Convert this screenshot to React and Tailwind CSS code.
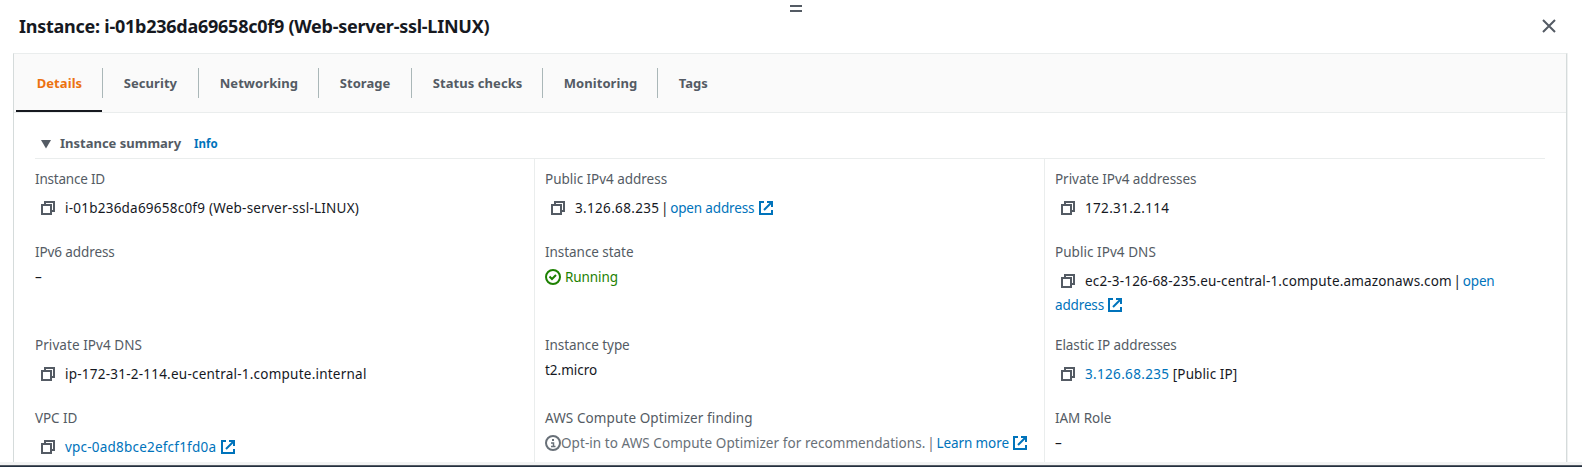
function CopyIcon() {
  return (
    <svg viewBox="0 0 16 16" className="mr-[9px] ml-[5px] inline-block size-4 align-[-3px]" fill="none" stroke="#545b64" strokeWidth="2">
      <path d="M2 5h9v9H2z" />
      <path d="M5 5V2h9v9h-3" />
    </svg>
  );
}

function ExternalIcon() {
  return (
    <svg viewBox="0 0 16 16" className="inline-block size-4 align-[-3px]" fill="none" stroke="#0073bb" strokeWidth="2">
      <path d="M14 10v4H2V2h4" />
      <path d="M9 2h5v5M6 10l8-8" />
    </svg>
  );
}

function CheckIcon() {
  return (
    <svg viewBox="0 0 16 16" className="mr-1 inline-block size-4 align-[-3px]" fill="none" stroke="#1d8102" strokeWidth="2">
      <circle cx="8" cy="8" r="7" />
      <path d="M4.500 7.500L7 10l4-4" />
    </svg>
  );
}

function InfoIcon() {
  return (
    <svg viewBox="0 0 16 16" className="inline-block size-4 align-[-3px]" fill="none" stroke="#687078" strokeWidth="2">
      <circle cx="8" cy="8" r="7" />
      <path d="M7 5h2" />
      <path d="M6 8h2.500v3.500M6 11.500h4.500" strokeWidth="1.500" />
    </svg>
  );
}

const tabs = [
  { name: "Details", size: "w-[87px] border-r text-[#ec7211]", active: true },
  { name: "Security", size: "w-[96px] border-r" },
  { name: "Networking", size: "w-[120px] border-r" },
  { name: "Storage", size: "w-[93px] border-r" },
  { name: "Status checks", size: "w-[131px] border-r" },
  { name: "Monitoring", size: "w-[115px] border-r" },
  { name: "Tags", size: "w-[80px]" },
];

const T = ({ t = "", children }) => <span className={t}>{children}</span>;
const Link = ({ t = "", children }) => <a className={`text-[#0073bb] ${t}`}>{children}</a>;
const Pipe = () => <span className="mx-[-1.8px]">{" | "}</span>;

function Field({ label, track = "", copy, children }) {
  return (
    <div className="pt-2 whitespace-nowrap">
      <div className={`h-[25px] text-[#545b64] ${track}`}>{label}</div>
      <div className={copy ? "pt-1" : ""}>
        {copy && <CopyIcon />}
        {children}
      </div>
    </div>
  );
}

const column = "grid grid-rows-[73px_93px_73px_64px]";

export default function App() {
  return (
    <div className="flex h-[467px] w-[1582px] flex-col overflow-hidden bg-white font-['Noto_Sans','Open_Sans',sans-serif] text-[13.5px] leading-6 text-[#16191f]">
      <header className="grid h-[53px] shrink-0 grid-cols-[771px_12px_1fr] pr-[26px] pl-[19px]">
        <h1 className="pt-[14px] text-[18px] font-bold tracking-[-0.25px] whitespace-nowrap">
          Instance: i-01b236da69658c0f9 (Web-server-ssl-LINUX)
        </h1>
        <div className="mt-[5px] h-[7px] border-y-2 border-[#545b64]" />
        <svg viewBox="0 0 14 14" className="mt-[19px] size-[14px] justify-self-end" fill="none" stroke="#545b64" strokeWidth="2">
          <path d="M1 1l12 12M13 1L1 13" />
        </svg>
      </header>
      <main className="mr-[15px] ml-[13px] flex h-[409px] shrink-0 flex-col border-x border-t border-x-[#d5dbdb] border-t-[#eaeded] shadow-[1px_0_0_#eff1f1]">
        <nav className="flex h-[59px] shrink-0 items-stretch border-b border-[#eaeded] bg-[#fafafa] pl-[2px] text-[13px] font-bold tracking-[0.07px] text-[#545b64]">
          {tabs.map((tab) => (
            <div key={tab.name} className="flex flex-col justify-between">
              <div className={`mt-[14px] h-[30px] border-[#aab7b8] pl-[20.7px] leading-[30px] whitespace-nowrap ${tab.size}`}>{tab.name}</div>
              {tab.active && <div className="mr-px h-[2px] bg-[#16191f]" />}
            </div>
          ))}
        </nav>
        <div className="mr-[21px] ml-[21px] flex h-[46px] shrink-0 items-end border-b border-[#eaeded] pb-px">
          <svg viewBox="0 0 10 9" className="mb-[8px] ml-[6px] h-[9px] w-[10px]" fill="#545b64">
            <path d="M0 0h10L5 8.500z" />
          </svg>
          <div className="mb-px ml-[9px] flex items-baseline gap-[13px] font-bold">
            <span className="text-[13px] text-[#545b64]">Instance summary</span>
            <a className="text-[11.5px] text-[#0073bb]">Info</a>
          </div>
        </div>
        <div className="mr-[21px] ml-[21px] grid min-h-0 flex-1 grid-cols-[499px_510px_1fr]">
          <section className={column}>
            <Field label="Instance ID" track="tracking-[-0.2px]" copy>
              <T t="tracking-[0.23px]">i-01b236da69658c0f9 (Web-server-ssl-LINUX)</T>
            </Field>
            <Field label="IPv6 address" track="tracking-[-0.1px]">–</Field>
            <Field label="Private IPv4 DNS" track="tracking-[0.06px]" copy>
              <T t="tracking-[0.23px]">ip-172-31-2-114.eu-central-1.compute.internal</T>
            </Field>
            <Field label="VPC ID" track="tracking-[-0.1px]" copy>
              <Link><T t="tracking-[0.21px]">vpc-0ad8bce2efcf1fd0a</T> <ExternalIcon /></Link>
            </Field>
          </section>
          <section className={`${column} border-l border-[#eaeded] pl-[10px]`}>
            <Field label="Public IPv4 address" track="tracking-[-0.03px]" copy>
              <T t="tracking-[0.33px]">3.126.68.235</T>
              <Pipe />
              <Link><T t="tracking-[-0.15px]">open address</T> <ExternalIcon /></Link>
            </Field>
            <Field label="Instance state" track="tracking-[-0.05px]">
              <span className="tracking-[-0.08px] text-[#1d8102]"><CheckIcon />Running</span>
            </Field>
            <Field label="Instance type" track="tracking-[-0.06px]">t2.micro</Field>
            <Field label="AWS Compute Optimizer finding" track="tracking-[0.1px]">
              <span className="tracking-[0.06px] text-[#687078]">
                <InfoIcon />Opt-in to AWS Compute Optimizer for recommendations.<Pipe />
              </span>
              <Link><T t="tracking-[-0.1px]">Learn more</T> <ExternalIcon /></Link>
            </Field>
          </section>
          <section className={`${column} border-l border-[#eaeded] pl-[10px]`}>
            <Field label="Private IPv4 addresses" track="tracking-[-0.05px]" copy>
              <T t="tracking-[0.33px]">172.31.2.114</T>
            </Field>
            <Field label="Public IPv4 DNS" track="tracking-[0.05px]" copy>
              <T t="tracking-[0.17px]">ec2-3-126-68-235.eu-central-1.compute.amazonaws.com</T>
              <Pipe />
              <Link t="tracking-[-0.15px]">open<br />address <ExternalIcon /></Link>
            </Field>
            <Field label="Elastic IP addresses" track="tracking-[-0.1px]" copy>
              <Link t="tracking-[0.33px]">3.126.68.235</Link> <T t="tracking-[0.1px]">[Public IP]</T>
            </Field>
            <Field label="IAM Role" track="tracking-[-0.05px]">–</Field>
          </section>
        </div>
      </main>
      <div className="h-[3px] shrink-0 bg-[#f2f3f3]" />
      <div className="h-[2px] shrink-0 border-t border-[#545b64] bg-[#232f3e]" />
    </div>
  );
}
